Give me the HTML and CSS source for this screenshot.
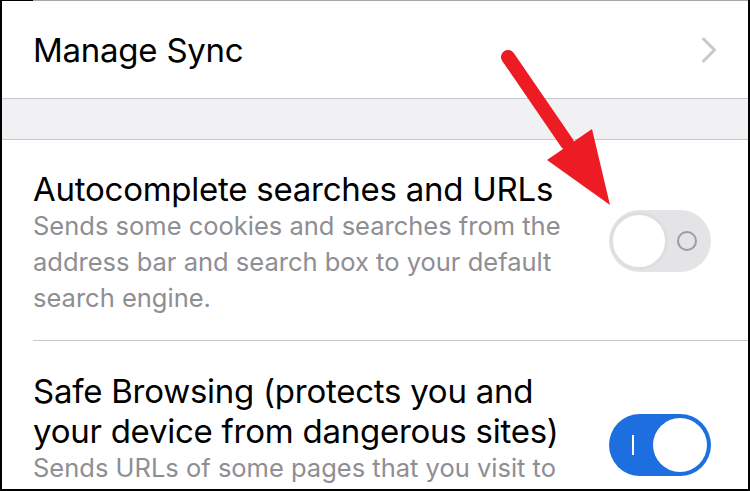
FILE: index.html
```html
<!DOCTYPE html>
<html lang="en">
<head>
<meta charset="utf-8">
<title>Settings</title>
<link rel="stylesheet" href="styles.css">
</head>
<body>
<div class="screen">
  <div class="top-edge"></div>

  <div class="cell nav-cell">
    <span class="title">Manage Sync</span>
    <svg class="chevron" width="16" height="26" viewBox="0 0 16 26" aria-hidden="true">
      <path d="M2.5 2 L13.5 13 L2.5 24" fill="none" stroke="#c7c7cc" stroke-width="3" stroke-linecap="round" stroke-linejoin="round"/>
    </svg>
  </div>

  <div class="section-gap"></div>

  <div class="cell switch-cell">
    <div class="text">
      <div class="title">Autocomplete searches and URLs</div>
      <div class="detail">Sends some cookies and searches from the address bar and search box to your default search engine.</div>
    </div>
    <div class="toggle toggle-off">
      <span class="knob"></span>
      <span class="off-mark"></span>
    </div>
  </div>

  <div class="divider"></div>

  <div class="cell switch-cell safe-cell">
    <div class="text">
      <div class="title">Safe Browsing (protects you and your device from dangerous sites)</div>
      <div class="detail">Sends URLs of some pages that you visit to Google.</div>
    </div>
    <div class="toggle toggle-on">
      <span class="on-mark"></span>
      <span class="knob"></span>
    </div>
  </div>

  <svg class="annotation" width="750" height="491" viewBox="0 0 750 491" aria-hidden="true">
    <line x1="508" y1="57" x2="567" y2="143" stroke="#ed1c24" stroke-width="14" stroke-linecap="round"/>
    <polygon points="547,160 592,129 610,205" fill="#ed1c24"/>
  </svg>
</div>
</body>
</html>
```

FILE: styles.css
```css
* {
  box-sizing: border-box;
}

html, body {
  margin: 0;
  padding: 0;
  background: #fff;
}

.screen {
  position: relative;
  width: 750px;
  height: 491px;
  overflow: hidden;
  background: #fff;
  border-left: 2px solid #000;
  border-right: 2px solid #000;
  border-bottom: 2px solid #000;
  font-family: "Inter", "Roboto", "Liberation Sans", sans-serif;
  color: #000;
}

.top-edge {
  height: 1px;
  background: linear-gradient(to right, #000 0, #000 31px, #a6a6a6 31px);
}

.cell {
  display: flex;
  align-items: center;
  background: #fff;
}

.title {
  font-size: 33px;
  line-height: 40px;
  font-weight: 400;
  letter-spacing: -0.25px;
}

.nav-cell {
  height: 98px;
  padding: 0 31px;
  justify-content: space-between;
  border-bottom: 1px solid #c8c7cc;
}

.chevron {
  display: block;
}

.section-gap {
  height: 41px;
  background: #f1f1f4;
  border-bottom: 1px solid #c8c7cc;
}

.switch-cell {
  gap: 30px;
  padding: 29px 37px 24px 31px;
}

.safe-cell {
  padding-top: 30px;
}

.text {
  flex: 1;
  min-width: 0;
}

.detail {
  margin-top: -1px;
  font-size: 25.5px;
  line-height: 36px;
  color: #8e8e93;
}

.divider {
  height: 1px;
  margin-left: 31px;
  background: #c8c7cc;
}

.toggle {
  flex: none;
  width: 102px;
  height: 62px;
  border-radius: 31px;
  display: flex;
  align-items: center;
  justify-content: space-between;
  margin-bottom: 3px;
}

.toggle-off {
  background: #e4e4e6;
  padding: 0 14px 0 1px;
}

.toggle-off .knob {
  width: 58px;
  height: 58px;
  border-radius: 50%;
  background: #fff;
  border: 3px solid #dedede;
}

.off-mark {
  width: 20px;
  height: 20px;
  border-radius: 50%;
  border: 2px solid #9c9c9c;
}

.toggle-on {
  background: #1d6fe0;
  padding: 0 4px 0 23px;
}

.toggle-on .knob {
  width: 54px;
  height: 54px;
  border-radius: 50%;
  background: #fff;
}

.on-mark {
  width: 2px;
  height: 20px;
  background: #fff;
}

.annotation {
  position: absolute;
  left: -2px;
  top: 0;
  pointer-events: none;
}
```
